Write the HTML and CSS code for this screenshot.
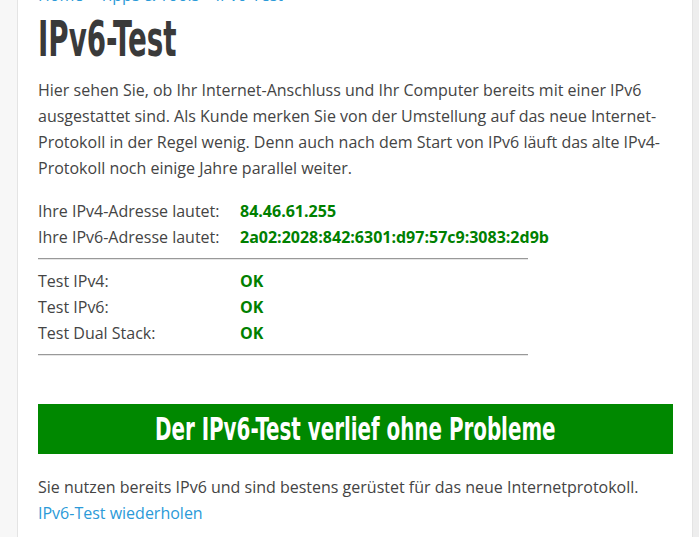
FILE: index.html
```html
<!DOCTYPE html>
<html lang="de">
<head>
    <meta charset="UTF-8">
    <meta name="viewport" content="width=device-width, initial-scale=1.0">
    <title>IPv6-Test</title>
    <link rel="stylesheet" href="styles.css">
</head>
<body>
    <div class="page">
        <div class="main">
            <div class="breadcrumb">
                <a href="#">Home</a> » <a href="#">Tipps &amp; Tools</a> » <a href="#">IPv6-Test</a>
            </div>

            <h1><span>IPv6-Test</span></h1>

            <p class="intro">Hier sehen Sie, ob Ihr Internet-Anschluss und Ihr Computer bereits mit einer IPv6 ausgestattet sind. Als Kunde merken Sie von der Umstellung auf das neue Internet-Protokoll in der Regel wenig. Denn auch nach dem Start von IPv6 läuft das alte IPv4-Protokoll noch einige Jahre parallel weiter.</p>

            <div class="results">
                <div class="label">Ihre IPv4-Adresse lautet:</div>
                <div class="value">84.46.61.255</div>
                <div class="label">Ihre IPv6-Adresse lautet:</div>
                <div class="value">2a02:2028:842:6301:d97:57c9:3083:2d9b</div>
            </div>
            <hr>
            <div class="results">
                <div class="label">Test IPv4:</div>
                <div class="value">OK</div>
                <div class="label">Test IPv6:</div>
                <div class="value">OK</div>
                <div class="label">Test Dual Stack:</div>
                <div class="value">OK</div>
            </div>
            <hr>

            <div class="banner"><span>Der IPv6-Test verlief ohne Probleme</span></div>

            <p class="outro">
                Sie nutzen bereits IPv6 und sind bestens gerüstet für das neue Internetprotokoll.<br>
                <a href="#">IPv6-Test wiederholen</a>
            </p>
        </div>
        <div class="gutter"></div>
    </div>
</body>
</html>
```

FILE: styles.css
```css
body {
    margin: 0;
    background: #f7f7f7;
    font-family: 'Open Sans', 'Liberation Sans', sans-serif;
    font-size: 16px;
    line-height: 26px;
    color: #444;
    overflow: hidden;
}
a {
    color: #2b9ad8;
    text-decoration: none;
}
.page {
    display: flex;
    min-height: 100vh;
}
.main {
    width: 635px;
    margin-left: 17px;
    padding: 0 19px 0 20px;
    background: #fff;
    border-left: 1px solid #e4e4e4;
    border-right: 1px solid #e4e4e4;
}
.gutter {
    flex: 1;
    background: #eee;
}
.breadcrumb {
    margin-top: -15px;
    line-height: 20px;
    color: #2b9ad8;
}
h1 {
    margin: 8px 0 10px;
    font-family: 'Liberation Sans Narrow', 'DejaVu Sans Condensed', sans-serif;
    font-weight: bold;
    font-size: 49px;
    line-height: 54px;
    color: #3a3a3a;
}
h1 span {
    display: inline-block;
    transform: scaleX(0.63);
    transform-origin: left center;
}
.intro {
    margin: 0 0 17px;
}
.results {
    display: grid;
    grid-template-columns: 202px 1fr;
}
.value {
    color: #008000;
    font-weight: bold;
}
hr {
    width: 490px;
    margin: 8px 0;
    border: none;
    border-top: 1px solid #999;
    border-bottom: 1px solid #e6e6e6;
}
.banner {
    margin-top: 48px;
    height: 50px;
    background: #008800;
    color: #fff;
    text-align: center;
    font-family: 'Liberation Sans Narrow', 'DejaVu Sans Condensed', sans-serif;
    font-weight: bold;
    font-size: 32px;
    line-height: 50px;
}
.banner span {
    display: inline-block;
    transform: scaleX(0.69);
}
.outro {
    margin: 20px 0 0;
}
```
